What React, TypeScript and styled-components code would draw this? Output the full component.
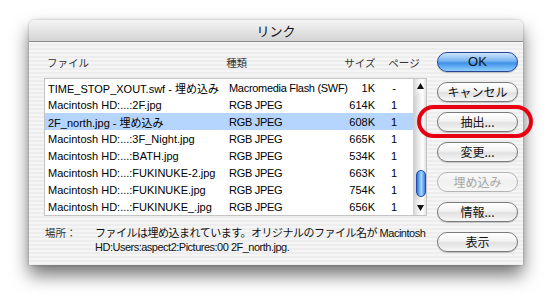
import React from 'react';
import styled, { createGlobalStyle, css } from 'styled-components';

const GlobalStyle = createGlobalStyle`
    html, body {
        margin: 0;
        padding: 0;
        background: #ffffff;
    }
    body {
        font-family: 'Liberation Sans', 'Noto Sans CJK JP', sans-serif;
        font-size: 11px;
        color: #000;
    }
`;

type Link = {
    name: string;
    kind: string;
    size: string;
    page: string;
    selected?: boolean;
};

const links: Link[] = [
    { name: 'TIME_STOP_XOUT.swf - 埋め込み', kind: 'Macromedia Flash (SWF)', size: '1K', page: '-' },
    { name: 'Macintosh HD:...:2F.jpg', kind: 'RGB JPEG', size: '614K', page: '1' },
    { name: '2F_north.jpg - 埋め込み', kind: 'RGB JPEG', size: '608K', page: '1', selected: true },
    { name: 'Macintosh HD:...:3F_Night.jpg', kind: 'RGB JPEG', size: '665K', page: '1' },
    { name: 'Macintosh HD:...:BATH.jpg', kind: 'RGB JPEG', size: '534K', page: '1' },
    { name: 'Macintosh HD:...:FUKINUKE-2.jpg', kind: 'RGB JPEG', size: '663K', page: '1' },
    { name: 'Macintosh HD:...:FUKINUKE.jpg', kind: 'RGB JPEG', size: '754K', page: '1' },
    { name: 'Macintosh HD:...:FUKINUKE_.jpg', kind: 'RGB JPEG', size: '656K', page: '1' },
];

const App = () => {
    return (
        <Page>
            <GlobalStyle />
            <Window>
                <TitleBar>リンク</TitleBar>
                <Body>
                    <LeftPane>
                        <HeaderRow>
                            <NameCol>ファイル</NameCol>
                            <KindCol>種類</KindCol>
                            <SizeCol $header>サイズ</SizeCol>
                            <PageCol $header>ページ</PageCol>
                        </HeaderRow>
                        <ListBox>
                            <Rows>
                                {links.map((l) => (
                                    <Row key={l.name} $selected={l.selected}>
                                        <NameCol>{l.name}</NameCol>
                                        <KindCol>{l.kind}</KindCol>
                                        <SizeCol>{l.size}</SizeCol>
                                        <PageCol>{l.page}</PageCol>
                                    </Row>
                                ))}
                            </Rows>
                            <ScrollBar>
                                <Arrow>
                                    <svg width="7" height="6" viewBox="0 0 7 6"><path d="M3.5 0 L7 6 L0 6 Z" fill="#111" /></svg>
                                </Arrow>
                                <Track>
                                    <Thumb />
                                </Track>
                                <Arrow>
                                    <svg width="7" height="6" viewBox="0 0 7 6"><path d="M0 0 L7 0 L3.5 6 Z" fill="#111" /></svg>
                                </Arrow>
                            </ScrollBar>
                        </ListBox>
                        <Footer>
                            <FooterLabel>場所：</FooterLabel>
                            <FooterText>
                                ファイルは埋め込まれています。オリジナルのファイル名が Macintosh<br />
                                HD:Users:aspect2:Pictures:00 2F_north.jpg.
                            </FooterText>
                        </Footer>
                    </LeftPane>
                    <ButtonColumn>
                        <Button $primary>OK</Button>
                        <Button>キャンセル</Button>
                        <Highlight>
                            <Button>抽出...</Button>
                            <Ring />
                        </Highlight>
                        <Button>変更...</Button>
                        <Button disabled>埋め込み</Button>
                        <Button>情報...</Button>
                        <Button>表示</Button>
                    </ButtonColumn>
                </Body>
            </Window>
        </Page>
    );
};

export default App;

const Page = styled.div`
    width: 552px;
    height: 299px;
    padding: 20px 0 0 29px;
    box-sizing: border-box;
    background: #fff;
`;

const Window = styled.div`
    width: 494px;
    height: 245px;
    display: flex;
    flex-direction: column;
    border-radius: 6px 6px 0 0;
    background: repeating-linear-gradient(180deg, #ededed 0px, #ededed 2px, #f5f5f5 2px, #f5f5f5 4px);
    box-shadow: 0 10px 18px rgba(0, 0, 0, 0.55), 0 0 3px rgba(0, 0, 0, 0.25);
`;

const TitleBar = styled.div`
    height: 22px;
    box-sizing: border-box;
    border-radius: 6px 6px 0 0;
    border-bottom: 1px solid #8c8c8c;
    background: linear-gradient(180deg, #f4f4f4 0%, #e4e4e4 50%, #d4d4d4 100%);
    font-family: 'Noto Sans CJK JP', sans-serif;
    font-size: 13px;
    line-height: 21px;
    text-align: center;
    color: #111;
`;

const Body = styled.div`
    flex: 1;
    display: flex;
    padding: 10px 6px 0 16px;
`;

const LeftPane = styled.div`
    width: 381px;
    display: flex;
    flex-direction: column;
`;

const HeaderRow = styled.div`
    height: 27px;
    display: flex;
    align-items: flex-start;
    padding: 4px 0 0 2px;
    box-sizing: border-box;
    line-height: 14px;
    color: #333;
    font-family: 'Noto Sans CJK JP', sans-serif;
    font-size: 10.5px;
`;

const NameCol = styled.div`
    width: 181px;
    white-space: nowrap;
    overflow: hidden;
`;

const KindCol = styled.div`
    width: 110px;
    white-space: nowrap;
    letter-spacing: -0.3px;
`;

const SizeCol = styled.div<{ $header?: boolean }>`
    width: 36px;
    text-align: right;
    white-space: nowrap;
    ${(p) => p.$header && css`
        width: 40px;
        text-align: left;
        padding-left: 9px;
        box-sizing: border-box;
    `}
`;

const PageCol = styled.div<{ $header?: boolean }>`
    width: 38px;
    text-align: center;
    ${(p) => p.$header && css`
        text-align: left;
        padding-left: 13px;
    `}
`;

const ListBox = styled.div`
    height: 136px;
    display: flex;
    background: #fff;
    box-shadow: 0 0 0 1px #c4c4c4;
`;

const Rows = styled.div`
    flex: 1;
    display: flex;
    flex-direction: column;
`;

const Row = styled.div<{ $selected?: boolean }>`
    height: 17px;
    display: flex;
    align-items: center;
    padding-left: 3px;
    background: ${(p) => (p.$selected ? '#b5d5ff' : 'transparent')};
`;

const ScrollBar = styled.div`
    width: 15px;
    display: flex;
    flex-direction: column;
    background: linear-gradient(90deg, #d8d8d8 0%, #f4f4f4 40%, #ffffff 70%, #e4e4e4 100%);
    border-left: 1px solid #d0d0d0;
`;

const Arrow = styled.div`
    height: 14px;
    display: flex;
    align-items: center;
    justify-content: center;
`;

const Track = styled.div`
    flex: 1;
    display: flex;
    flex-direction: column;
    justify-content: flex-end;
    padding: 0 0 4px 2px;
    border-radius: 6px;
    background: linear-gradient(90deg, #cfcfcf 0%, #eeeeee 45%, #ffffff 75%, #dcdcdc 100%);
`;

const Thumb = styled.div`
    width: 10px;
    height: 27px;
    border-radius: 5px;
    border: 1px solid #1f4fa8;
    box-sizing: border-box;
    background: linear-gradient(90deg, #2f6fd6 0%, #7cb8f5 35%, #a9d5ff 55%, #3b80e0 100%);
`;

const Footer = styled.div`
    display: flex;
    margin-top: 11px;
    line-height: 14px;
    color: #111;
`;

const FooterLabel = styled.div`
    width: 50px;
    flex-shrink: 0;
    font-family: 'Noto Sans CJK JP', sans-serif;
    font-size: 10.5px;
    color: #333;
`;

const FooterText = styled.div`
    white-space: nowrap;
    letter-spacing: -0.5px;
`;

const ButtonColumn = styled.div`
    margin-left: 11px;
    width: 81px;
    display: flex;
    flex-direction: column;
    gap: 10px;
`;

const Button = styled.button<{ $primary?: boolean }>`
    width: 81px;
    height: 20px;
    padding: 0;
    border-radius: 10px;
    border: 1px solid #7a7a7a;
    background: linear-gradient(180deg, #ffffff 0%, #f2f2f2 45%, #e1e1e1 55%, #f7f7f7 100%);
    font-family: 'Noto Sans CJK JP', sans-serif;
    font-size: 12px;
    line-height: 18px;
    color: #111;
    box-shadow: 0 1px 1px rgba(0, 0, 0, 0.2);
    &:disabled {
        color: #a8a8a8;
        border-color: #b4b4b4;
        background: linear-gradient(180deg, #fafafa 0%, #f0f0f0 50%, #f6f6f6 100%);
        box-shadow: none;
    }
    ${(p) => p.$primary && css`
        border-color: #27449a;
        background: linear-gradient(180deg, #cfe6fc 0%, #77b4f0 45%, #3f8fe8 55%, #8ed0ff 100%);
        font-family: 'Liberation Sans', sans-serif;
        font-size: 13px;
    `}
`;

const Highlight = styled.div`
    position: relative;
    height: 20px;
`;

const Ring = styled.div`
    position: absolute;
    left: -20px;
    right: -15px;
    top: -7px;
    bottom: -6px;
    border: 4px solid #e60012;
    border-radius: 18px;
    pointer-events: none;
`;
